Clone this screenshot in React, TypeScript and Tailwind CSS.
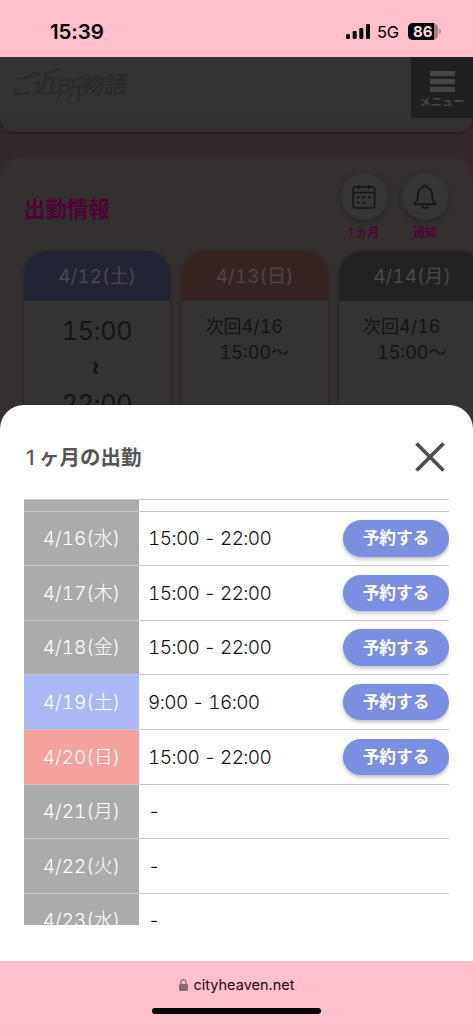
import React from 'react';

interface Day {
  date: string;
  time: string;
  color: string;
  bookable: boolean;
}

const DAYS: Day[] = [
  { date: '4/16(水)', time: '15:00 - 22:00', color: 'bg-[#ababab]', bookable: true },
  { date: '4/17(木)', time: '15:00 - 22:00', color: 'bg-[#ababab]', bookable: true },
  { date: '4/18(金)', time: '15:00 - 22:00', color: 'bg-[#ababab]', bookable: true },
  { date: '4/19(土)', time: '9:00 - 16:00', color: 'bg-[#aab8f3]', bookable: true },
  { date: '4/20(日)', time: '15:00 - 22:00', color: 'bg-[#f5a29c]', bookable: true },
  { date: '4/21(月)', time: '-', color: 'bg-[#ababab]', bookable: false },
  { date: '4/22(火)', time: '-', color: 'bg-[#ababab]', bookable: false },
  { date: '4/23(水)', time: '-', color: 'bg-[#ababab]', bookable: false },
];

const StatusBar = () => (
  <div className="flex h-[57px] shrink-0 items-start justify-between bg-[#ffbfcb] pr-[32px] pl-[50px] text-black">
    <span className="mt-[17px] text-[20.5px] leading-[30px] font-semibold tracking-[-0.1px]">15:39</span>
    <div className="mt-[23px] flex h-[17px] items-center">
      <svg width="25" height="15" viewBox="0 0 25 15" fill="black">
        <rect x="0" y="10" width="4" height="5" rx="1.3" />
        <rect x="6.7" y="7" width="4" height="8" rx="1.3" />
        <rect x="13.3" y="4" width="4" height="11" rx="1.3" />
        <rect x="20" y="0" width="4" height="15" rx="1.3" />
      </svg>
      <span className="ml-[6px] w-[24px] pt-[2px] text-[16.5px] leading-[17px] tracking-[-0.2px]">5G</span>
      <div className="ml-[7px] flex h-[17px] w-[30px] items-center overflow-hidden rounded-[5px] bg-[#a88088]">
        <span className="h-full w-[26px] bg-black pl-[5px] text-[15px] leading-[17px] font-bold text-[#ffdce2]">86</span>
      </div>
      <span className="ml-px h-[5px] w-[2px] rounded-r-full bg-[#b58a92]" />
    </div>
  </div>
);

const SiteHeader = () => (
  <header className="relative z-10 flex h-[61px] justify-between bg-[#333333]">
    <div className="flex -skew-x-12 items-start pt-[7px] pl-[10px] font-['Noto_Sans_CJK_JP',sans-serif] text-[#292929]">
      <span className="-rotate-6 text-[25px] leading-[38px]">ご</span>
      <span className="-ml-[4px] -rotate-6 text-[28px] leading-[34px]">近</span>
      <span className="-ml-[3px] -rotate-6 pt-[7px] text-[28px] leading-[34px]">所</span>
      <span className="-ml-[3px] pt-px text-[23px] leading-[36px] font-medium">物語</span>
    </div>
    <button className="flex w-[62px] flex-col items-center bg-[#202020] pt-[14px] text-[#454545]">
      <span className="h-[5px] w-[25px] bg-[#454545]" />
      <span className="mt-[3px] h-[5px] w-[25px] bg-[#454545]" />
      <span className="mt-[3px] h-[5px] w-[25px] bg-[#454545]" />
      <span className="mt-[2px] text-[11.3px] leading-[17px] font-bold">メニュー</span>
    </button>
  </header>
);

const CalendarIcon = () => (
  <svg width="24" height="24" viewBox="0 0 24 24" fill="none" stroke="#151515" strokeWidth="1.5">
    <rect x="1.2" y="2" width="21.4" height="21" rx="2" />
    <path d="M1.2 7.5h21.4M7 .2v4M17 .2v4" />
    <path d="M5 12.2h2.2M10.5 12.2h2.2M16.2 12.2h2.2M5 17.7h2.2M10.5 17.7h2.2" strokeWidth="2" />
  </svg>
);

const BellIcon = () => (
  <svg width="24" height="26" viewBox="0 0 24 26" fill="none" stroke="#151515" strokeWidth="1.6" strokeLinejoin="round">
    <path d="M10 3.6a2 2 0 0 1 4 0C17.5 4.5 19 7 19 10.5c0 5 .8 7 3.5 9v.8H1.5v-.8c2.7-2 3.5-4 3.5-9C5 7 6.5 4.5 10 3.6Z" />
    <path d="M9.3 21.5a2.7 2.7 0 0 0 5.4 0" />
  </svg>
);

const RoundAction = ({ label, children }: { label: React.ReactNode; children: React.ReactNode }) => (
  <div className="flex w-[48px] flex-col items-center">
    <button className="flex size-[47px] items-center justify-center rounded-full bg-[#353535] shadow-[0_2px_6px_rgba(0,0,0,0.25)]">
      {children}
    </button>
    <span className="mt-[4px] text-[12px] leading-[17px] font-bold whitespace-nowrap text-[#500335]">{label}</span>
  </div>
);

const DayCard = ({ date, color, children }: { date: string; color: string; children: React.ReactNode }) => (
  <div className="h-[240px] w-[146px] shrink-0 overflow-hidden rounded-t-[24px] bg-[#333333] shadow-[0_1px_4px_rgba(0,0,0,0.35)]">
    <div className={`flex h-[50px] items-center justify-center pt-[2px] text-[19px] text-[#484848] tabular-nums ${color}`}>{date}</div>
    <div className="text-[#151515]">{children}</div>
  </div>
);

const NextShift = () => (
  <div className="pt-[13px] text-[18px] leading-[26px] tabular-nums">
    <div className="pl-[24px]">次回4/16</div>
    <div className="pl-[38px]">15:00〜</div>
  </div>
);

const AttendanceSection = () => (
  <section className="mt-[24px] h-[400px] overflow-hidden rounded-t-[24px] bg-[#343030] pl-[24px]">
    <div className="flex h-[95px] justify-between pr-[24px]">
      <h2 className="pt-[36px] text-[21.5px] leading-[34px] font-bold text-[#500335]">出勤情報</h2>
      <div className="flex gap-[13px] pt-[17px]">
        <RoundAction label={<><span className="mr-[2px] font-medium">1</span>ヵ月</>}><CalendarIcon /></RoundAction>
        <RoundAction label="通知"><BellIcon /></RoundAction>
      </div>
    </div>
    <div className="flex gap-[11.5px]">
      <DayCard date="4/12(土)" color="bg-[#232433]">
        <div className="flex flex-col items-center pt-[12px] text-[25px] leading-[37px] tracking-[-0.2px] tabular-nums">
          <span>15:00</span>
          <span className="h-[36px] rotate-90 text-[22px] leading-[36px] font-bold">~</span>
          <span>22:00</span>
        </div>
      </DayCard>
      <DayCard date="4/13(日)" color="bg-[#352421]"><NextShift /></DayCard>
      <DayCard date="4/14(月)" color="bg-[#222222]"><NextShift /></DayCard>
    </div>
  </section>
);

const DayRow = ({ day }: { day: Day }) => (
  <div className="flex h-[54.6px] shrink-0 border-t border-[#c8c8c8]">
    <div className={`flex w-[115px] items-center justify-center pt-[2px] text-[19px] font-light text-white tabular-nums ${day.color}`}>{day.date}</div>
    <div className="flex flex-1 items-center justify-between pl-[9px]">
      <span className="pt-[2px] text-[19px] font-light tracking-[-0.6px] text-[#111111] tabular-nums">{day.time}</span>
      {day.bookable && (
        <button className="h-[36.5px] w-[106px] rounded-full bg-[#7a8ee2] text-[16.7px] leading-[36px] font-bold text-white shadow-[0_2px_4px_rgba(0,0,0,0.28)]">
          予約する
        </button>
      )}
    </div>
  </div>
);

const MonthSheet = () => (
  <div className="absolute inset-x-0 bottom-0 z-20 h-[556px] rounded-t-[24px] bg-white px-[24px]">
    <div className="flex h-[94px] items-center justify-between pt-[10px] pr-[4px]">
      <h2 className="flex pt-[2px] text-[20.5px] font-bold text-[#555555]">
        <span className="w-[15px] pl-[2px] font-medium">1</span>
        <span>ヶ月の出勤</span>
      </h2>
      <svg width="30" height="30" viewBox="0 0 30 30" stroke="#4d4d4d" strokeWidth="3.6">
        <path d="M1.5 1.5l27 27M28.5 1.5l-27 27" />
      </svg>
    </div>
    <div className="flex h-[426px] flex-col overflow-hidden">
      <div className="flex h-[11.6px] shrink-0 border-t border-[#c8c8c8]">
        <div className="w-[115px] bg-[#ababab]" />
      </div>
      {DAYS.map(day => <DayRow key={day.date} day={day} />)}
    </div>
  </div>
);

const AddressBar = () => (
  <div className="flex h-[63px] shrink-0 flex-col items-center bg-[#ffbfcb] pt-[14px]">
    <div className="flex items-center gap-[6px] text-[14.5px] leading-[20px] text-[#1c0a0e]">
      <svg width="9" height="12" viewBox="0 0 9 12">
        <rect x="0" y="5" width="9" height="7" rx="1.2" fill="#8c6871" />
        <path d="M2 5.5V3.2a2.5 2.5 0 0 1 5 0v2.3" fill="none" stroke="#8c6871" strokeWidth="1.2" />
      </svg>
      cityheaven.net
    </div>
    <div className="mt-[13px] h-[6px] w-[169px] rounded-full bg-black" />
  </div>
);

const App: React.FC = () => {
  return (
    <div className="flex h-[1024px] w-[473px] flex-col overflow-hidden bg-white font-['Inter','Noto_Sans_CJK_JP',sans-serif]">
      <StatusBar />
      <main className="relative flex-1 overflow-hidden bg-[#33282a]">
        <SiteHeader />
        <div className="h-[14px] rounded-b-[18px] bg-[#343030] shadow-[0_1px_2px_rgba(0,0,0,0.4)]" />
        <AttendanceSection />
        <MonthSheet />
      </main>
      <AddressBar />
    </div>
  );
};

export default App;
